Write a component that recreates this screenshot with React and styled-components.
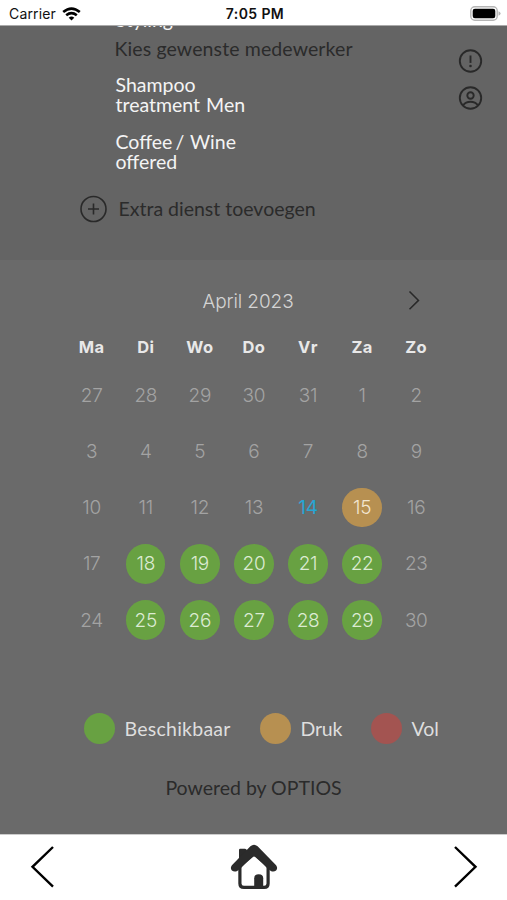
import React from "react";
import styled, { createGlobalStyle } from "styled-components";

const Global = createGlobalStyle`
  *, *::before, *::after { box-sizing: border-box; }
  body { margin: 0; background: #fff; }
  button { border: 0; padding: 0; margin: 0; background: none; font: inherit; color: inherit; display: flex; }
  svg { display: block; flex: none; }
`;

const Screen = styled.div`
  width: 507px;
  height: 900px;
  display: flex;
  flex-direction: column;
  overflow: hidden;
  font-family: Lato, sans-serif;
  font-size: 19.5px;
  color: #2b2b2b;
`;

const StatusBar = styled.header`
  height: 26px;
  flex: none;
  display: grid;
  grid-template-columns: 1fr auto 1fr;
  align-items: center;
  padding: 2px 6px 0 9px;
  border-bottom: 1px solid #aaa;
  background: #fff;
  font-family: Inter, sans-serif;
  font-size: 14px;
  color: #111;
`;

const Carrier = styled.div`
  display: flex;
  align-items: center;
  gap: 6px;
  letter-spacing: 0.15px;
`;

const Clock = styled.div`
  font-weight: 600;
  letter-spacing: 0.4px;
`;

const BatterySlot = styled.div`
  display: flex;
  justify-content: flex-end;
`;

const Services = styled.section`
  height: 234px;
  flex: none;
  display: flex;
  justify-content: space-between;
  overflow: hidden;
  background: #646464;
  padding: 0 24px 0 80px;
`;

const ServiceList = styled.div`
  margin-top: -16px;
  display: flex;
  flex-direction: column;
`;

const ServiceName = styled.div`
  margin: ${(p) => p.$margin};
  line-height: 19.5px;
  letter-spacing: 0;
  word-spacing: -2px;
  color: #f4f4f4;
  white-space: pre;
`;

const Employee = styled.div`
  margin: 7px 0 0 34.5px;
  line-height: 24px;
  letter-spacing: 0.12px;
  white-space: nowrap;
`;

const AddService = styled.button`
  && {
    margin-top: 24px;
    align-items: center;
    gap: 10.5px;
    letter-spacing: 0;
    line-height: 28px;
  }
`;

const SideActions = styled.div`
  margin-top: 22px;
  display: flex;
  flex-direction: column;
  gap: 11px;
`;

const Booking = styled.section`
  flex: 1;
  display: flex;
  flex-direction: column;
  background: #6a6a6a;
  padding-top: 25px;
`;

const MonthBar = styled.div`
  height: 32px;
  margin-left: 202.5px;
  width: 217px;
  display: flex;
  align-items: center;
  justify-content: space-between;
  font-family: Inter, sans-serif;
  font-weight: 300;
  font-size: 19px;
  letter-spacing: -0.1px;
  color: #d4d4d4;
`;

const Calendar = styled.div`
  width: 378.7px;
  margin-left: 64.6px;
  display: grid;
  grid-template-columns: repeat(7, 1fr);
  grid-template-rows: 50.4px repeat(5, 56.15px);
  place-items: center;
  font-family: Inter, sans-serif;
`;

const Weekday = styled.div`
  padding-top: 9px;
  font-size: 16.5px;
  font-weight: 700;
  letter-spacing: 0.4px;
  color: #e8e8e8;
`;

const dayFill = { free: "#68a142", busy: "#b79051" };
const dayInk = { free: "#dcebd2", busy: "#f3e6d0", today: "#27a5d3" };

const Day = styled.div`
  width: 39.5px;
  height: 39.5px;
  border-radius: 50%;
  display: flex;
  align-items: center;
  justify-content: center;
  font-size: 19px;
  letter-spacing: -0.3px;
  font-weight: ${(p) => (p.$state === "today" ? 400 : 300)};
  background: ${(p) => dayFill[p.$state] || "transparent"};
  color: ${(p) => dayInk[p.$state] || "#a3a3a3"};
`;

const Legend = styled.div`
  display: flex;
  height: 32px;
  margin: 64.6px 0 0 84px;
  color: #dedede;
`;

const LegendItem = styled.div`
  display: flex;
  align-items: center;
  gap: 9.5px;
  width: ${(p) => p.$width}px;
  letter-spacing: ${(p) => p.$spacing};
  white-space: nowrap;
`;

const Dot = styled.span`
  width: 31px;
  height: 31px;
  flex: none;
  border-radius: 50%;
  background: ${(p) => p.$color};
`;

const PoweredBy = styled.div`
  margin-top: 31px;
  line-height: 24px;
  text-align: center;
  letter-spacing: 0;
`;

const BottomNav = styled.nav`
  height: 66px;
  flex: none;
  display: flex;
  align-items: center;
  justify-content: space-between;
  padding: 0 28px 1px 29px;
  background: #fff;
  border-top: 1px solid #ccc;
`;

const WifiIcon = () => (
  <svg width="19" height="14" viewBox="0 0 19 14" fill="none" stroke="#000" strokeWidth="2.6">
    <path d="M1.2 5.1Q9.5-2 17.8 5.1" />
    <path d="M4.2 8.3Q9.5 4 14.8 8.3" />
    <path d="M6.7 10.7Q9.5 8.4 12.3 10.7L9.5 13.6Z" fill="#000" stroke="none" />
  </svg>
);

const BatteryIcon = () => (
  <svg width="31" height="15" viewBox="0 0 31 15">
    <rect x=".8" y=".8" width="26.4" height="13.4" rx="4" fill="#fff" stroke="#b5b5b5" strokeWidth="1.4" />
    <rect x="2.7" y="2.7" width="22.6" height="9.6" rx="2.2" fill="#000" />
    <path d="M28.5 5.3Q30.6 6 30.6 7.5T28.5 9.7Z" fill="#b5b5b5" />
  </svg>
);

const PlusIcon = () => (
  <svg width="28" height="28" viewBox="0 0 28 28" fill="none" stroke="#292929" strokeWidth="1.6">
    <circle cx="13.5" cy="14" r="12.5" />
    <path d="M13.5 8.5v11M8 14h11" />
  </svg>
);

const AlertIcon = () => (
  <svg width="25" height="26" viewBox="0 0 25 26" fill="none" stroke="#292929" strokeWidth="1.9">
    <circle cx="12.5" cy="13" r="10.7" />
    <path d="M12.5 7.5v7.4" />
    <circle cx="12.5" cy="18" r="1.3" fill="#292929" stroke="none" />
  </svg>
);

const UserIcon = () => (
  <svg width="25" height="26" viewBox="0 0 25 26" fill="none" stroke="#292929" strokeWidth="1.9">
    <circle cx="12.5" cy="13" r="10.7" />
    <circle cx="12.5" cy="10.5" r="3.2" />
    <path d="M5 20.5Q7.7 16.8 12.5 16.8T20 20.5" />
  </svg>
);

const NextMonthIcon = () => (
  <svg width="12" height="20" viewBox="0 0 12 20" fill="none" stroke="#292929" strokeWidth="1.5">
    <path d="M1.5 .5l9 8.9-9 8.9" />
  </svg>
);

const BackIcon = () => (
  <svg width="26" height="42" viewBox="0 0 26 42" fill="none" stroke="#000" strokeWidth="2.4">
    <path d="M24 1L3.5 20.8 24 40.6" />
  </svg>
);

const ForwardIcon = () => (
  <svg width="26" height="42" viewBox="0 0 26 42" fill="none" stroke="#000" strokeWidth="2.4">
    <path d="M2 1L22.5 20.8 2 40.6" />
  </svg>
);

const HomeIcon = () => (
  <svg width="48" height="46" viewBox="0 0 48 46">
    <path d="M9.9 22V39.4Q9.9 43.4 13.9 43.4H34.1Q38.1 43.4 38.1 39.4V22L24 10Z" fill="#fff" stroke="#2b2b2b" strokeWidth="3.2" />
    <path d="M9 19V6Q9 4.8 10.2 4.8H15Q16.6 4.8 17 6.5L18 14Z" fill="#2b2b2b" />
    <path d="M1.9 21.2L20.4 2.3Q24 -1 27.6 2.3L46.1 21.2Q48.2 24.2 46.1 26.4Q43.7 28.4 40.8 26.9L37 24 26.2 13.1Q24 11.2 21.8 13.1L11 24 7.2 26.9Q4.3 28.4 1.9 26.4Q-.2 24.2 1.9 21.2Z" fill="#2b2b2b" />
    <path d="M24.2 43V34.3Q24.2 30.3 28.7 30.3T33.2 34.3V43Z" fill="#2b2b2b" />
  </svg>
);

const weekdays = ["Ma", "Di", "Wo", "Do", "Vr", "Za", "Zo"];
const days = [27, 28, 29, 30, 31, ...Array.from({ length: 30 }, (_, i) => i + 1)];

function stateOf(index) {
  const date = index - 4;
  if (date === 14) return "today";
  if (date === 15) return "busy";
  if ((date >= 18 && date <= 22) || (date >= 25 && date <= 29)) return "free";
  return "none";
}

export default function App() {
  return (
    <Screen>
      <Global />
      <StatusBar>
        <Carrier>Carrier <WifiIcon /></Carrier>
        <Clock>7:05 PM</Clock>
        <BatterySlot><BatteryIcon /></BatterySlot>
      </StatusBar>
      <Services>
        <ServiceList>
          <ServiceName $margin="0 0 0 35.5px">Styling</ServiceName>
          <Employee>Kies gewenste medewerker</Employee>
          <ServiceName $margin="14.5px 0 0 35.5px">{"Shampoo\ntreatment  Men"}</ServiceName>
          <ServiceName $margin="18px 0 0 35.5px">{"Coffee /  Wine\noffered"}</ServiceName>
          <AddService><PlusIcon />Extra dienst toevoegen</AddService>
        </ServiceList>
        <SideActions>
          <button aria-label="Info"><AlertIcon /></button>
          <button aria-label="Account"><UserIcon /></button>
        </SideActions>
      </Services>
      <Booking>
        <MonthBar>
          <span>April 2023</span>
          <button aria-label="Volgende maand"><NextMonthIcon /></button>
        </MonthBar>
        <Calendar>
          {weekdays.map((name) => <Weekday key={name}>{name}</Weekday>)}
          {days.map((day, i) => <Day key={i} $state={stateOf(i)}>{day}</Day>)}
        </Calendar>
        <Legend>
          <LegendItem $width={176} $spacing="0.25px"><Dot $color="#68a142" />Beschikbaar</LegendItem>
          <LegendItem $width={111} $spacing="-0.2px"><Dot $color="#b79051" />Druk</LegendItem>
          <LegendItem $width={80} $spacing="0"><Dot $color="#a35451" />Vol</LegendItem>
        </Legend>
        <PoweredBy>Powered by OPTIOS</PoweredBy>
      </Booking>
      <BottomNav>
        <button aria-label="Terug"><BackIcon /></button>
        <button aria-label="Home"><HomeIcon /></button>
        <button aria-label="Verder"><ForwardIcon /></button>
      </BottomNav>
    </Screen>
  );
}
